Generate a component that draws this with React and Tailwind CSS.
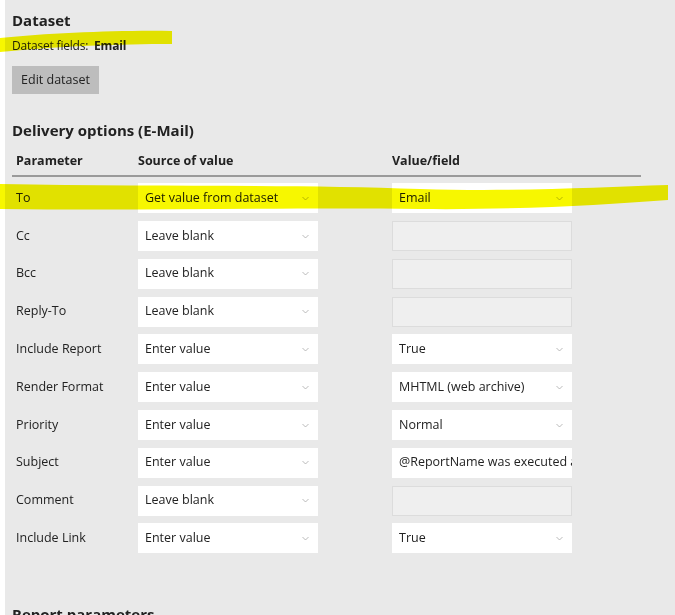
export default function App() {
  const rows = [
    ["To", "Get value from dataset", "Email", "select"],
    ["Cc", "Leave blank", "", "empty"],
    ["Bcc", "Leave blank", "", "empty"],
    ["Reply-To", "Leave blank", "", "empty"],
    ["Include Report", "Enter value", "True", "select"],
    ["Render Format", "Enter value", "MHTML (web archive)", "select"],
    ["Priority", "Enter value", "Normal", "select"],
    ["Subject", "Enter value", "@ReportName was executed at", "text"],
    ["Comment", "Leave blank", "", "empty"],
    ["Include Link", "Enter value", "True", "select"],
  ];
  const Chev = () => (
    <svg width="7" height="5" viewBox="0 0 7 5" className="shrink-0"><path d="M0.5 1 L3.5 4 L6.5 1" fill="none" stroke="#aaa" strokeWidth="0.8" /></svg>
  );
  const Sel = ({ t }) => (
    <div className="w-[180px] h-[30px] bg-white flex items-center justify-between pl-[7px] pr-[9px] text-[12.5px] text-[#222]"><span>{t}</span><Chev /></div>
  );
  return (
    <div className="w-[675px] h-[615px] bg-white overflow-hidden relative" style={{ fontFamily: '"Open Sans", sans-serif' }}>
      <div className="ml-[5px] h-full bg-[#e9e9e9] pl-[7px] pt-[9px] text-[#222]">
        <div className="text-[15px] font-bold h-[24px]">Dataset</div>
        <div className="mt-[4px] text-[12px] tracking-[-0.2px]">Dataset fields:&nbsp; <b>Email</b></div>
        <div className="mt-[11px] w-[87px] h-[28px] bg-[#bdbdbd] flex items-center justify-center text-[12.5px]">Edit dataset</div>
        <div className="mt-[25px] text-[15px] font-bold">Delivery options (E-Mail)</div>
        <div className="mt-[10px] w-[629px] border-b-2 border-[#9a9a9a] flex text-[12.5px] font-bold pb-[5px] pl-[4px]">
          <div className="w-[122px]">Parameter</div>
          <div className="w-[254px]">Source of value</div>
          <div>Value/field</div>
        </div>
        <div className="mt-[6px] flex flex-col gap-[7.8px]">
          {rows.map(([p, s, v, k]) => (
            <div key={p} className="flex items-center h-[30px] text-[12.5px]">
              <div className="w-[126px] pl-[4px]">{p}</div>
              <Sel t={s} />
              <div className="w-[74px]" />
              {k === "select" && <Sel t={v} />}
              {k === "empty" && <div className="w-[180px] h-[30px] bg-[#efefef] border border-[#dcdcdc]" />}
              {k === "text" && <div className="w-[180px] h-[30px] bg-white pl-[7px] flex items-center overflow-hidden whitespace-nowrap">{v}</div>}
            </div>
          ))}
        </div>
        <div className="mt-[50px] text-[15px] font-bold">Report parameters</div>
      </div>
      <svg className="absolute left-0 top-0 pointer-events-none mix-blend-multiply" width="675" height="615">
        <path d="M0 38 C50 33 120 30 172 31 L172 44 C120 44 60 46 0 52 Z" fill="#f7f700" />
        <path d="M0 184 C150 187 300 184 420 189 C520 192 600 187 668 185 L668 200 C600 205 520 210 420 209 C300 207 150 211 0 209 Z" fill="#f7f700" />
      </svg>
    </div>
  );
}
